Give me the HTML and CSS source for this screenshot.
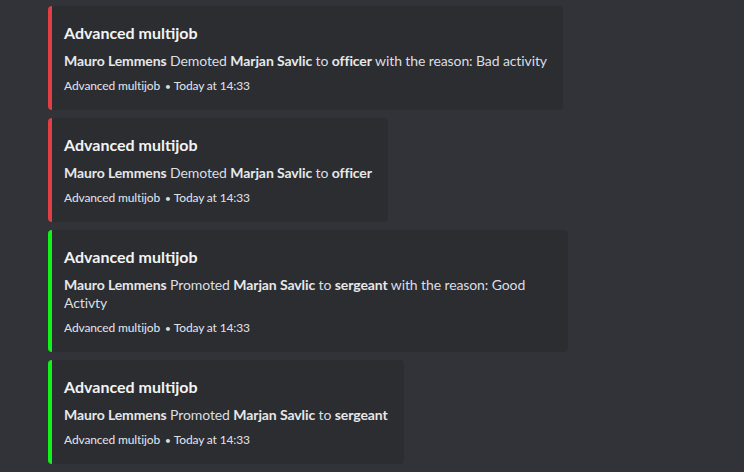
FILE: index.html
```html
<!DOCTYPE html>
<html lang="en">

<head>
    <meta charset="UTF-8">
    <meta name="viewport" content="width=device-width, initial-scale=1.0">
    <title>Advanced multijob</title>
    <link rel="stylesheet" href="styles.css">
</head>

<body>
    <div id="messages">
        <div class="embed red">
            <div class="title">Advanced multijob</div>
            <div class="desc"><b>Mauro Lemmens</b> Demoted <b>Marjan Savlic</b> to <b>officer</b> with the reason: Bad activity</div>
            <div class="footer">Advanced multijob<span class="dot">•</span>Today at 14:33</div>
        </div>

        <div class="embed red">
            <div class="title">Advanced multijob</div>
            <div class="desc"><b>Mauro Lemmens</b> Demoted <b>Marjan Savlic</b> to <b>officer</b></div>
            <div class="footer">Advanced multijob<span class="dot">•</span>Today at 14:33</div>
        </div>

        <div class="embed green">
            <div class="title">Advanced multijob</div>
            <div class="desc"><b>Mauro Lemmens</b> Promoted <b>Marjan Savlic</b> to <b>sergeant</b> with the reason: Good Activty</div>
            <div class="footer">Advanced multijob<span class="dot">•</span>Today at 14:33</div>
        </div>

        <div class="embed green">
            <div class="title">Advanced multijob</div>
            <div class="desc"><b>Mauro Lemmens</b> Promoted <b>Marjan Savlic</b> to <b>sergeant</b></div>
            <div class="footer">Advanced multijob<span class="dot">•</span>Today at 14:33</div>
        </div>
    </div>
</body>

</html>
```

FILE: styles.css
```css
body {
    margin: 0;
    background: #313338;
    font-family: Lato, "Noto Sans", sans-serif;
    overflow: hidden;
}

#messages {
    display: flex;
    flex-direction: column;
    align-items: flex-start;
    gap: 8px;
    padding: 6px 0 0 48px;
}

.embed {
    box-sizing: border-box;
    max-width: 520px;
    background: #2b2d31;
    border-left: 4px solid;
    border-radius: 4px;
    padding: 8px 16px 16px 12px;
}

.red {
    border-left-color: #e23f45;
}

.green {
    border-left-color: #12f21a;
}

.title {
    margin-top: 8px;
    font-size: 16px;
    line-height: 22px;
    font-weight: 700;
    color: #f2f3f5;
}

.desc {
    margin-top: 8px;
    font-size: 14px;
    line-height: 18px;
    letter-spacing: -0.1px;
    color: #dbdee1;
}

.desc b {
    font-weight: 700;
    color: #e6e8ea;
}

.footer {
    margin-top: 8px;
    font-size: 12px;
    line-height: 16px;
    font-weight: 500;
    letter-spacing: -0.15px;
    color: #dbdee1;
}

.dot {
    margin: 0 3px 0 5px;
    font-size: 10px;
}
```
